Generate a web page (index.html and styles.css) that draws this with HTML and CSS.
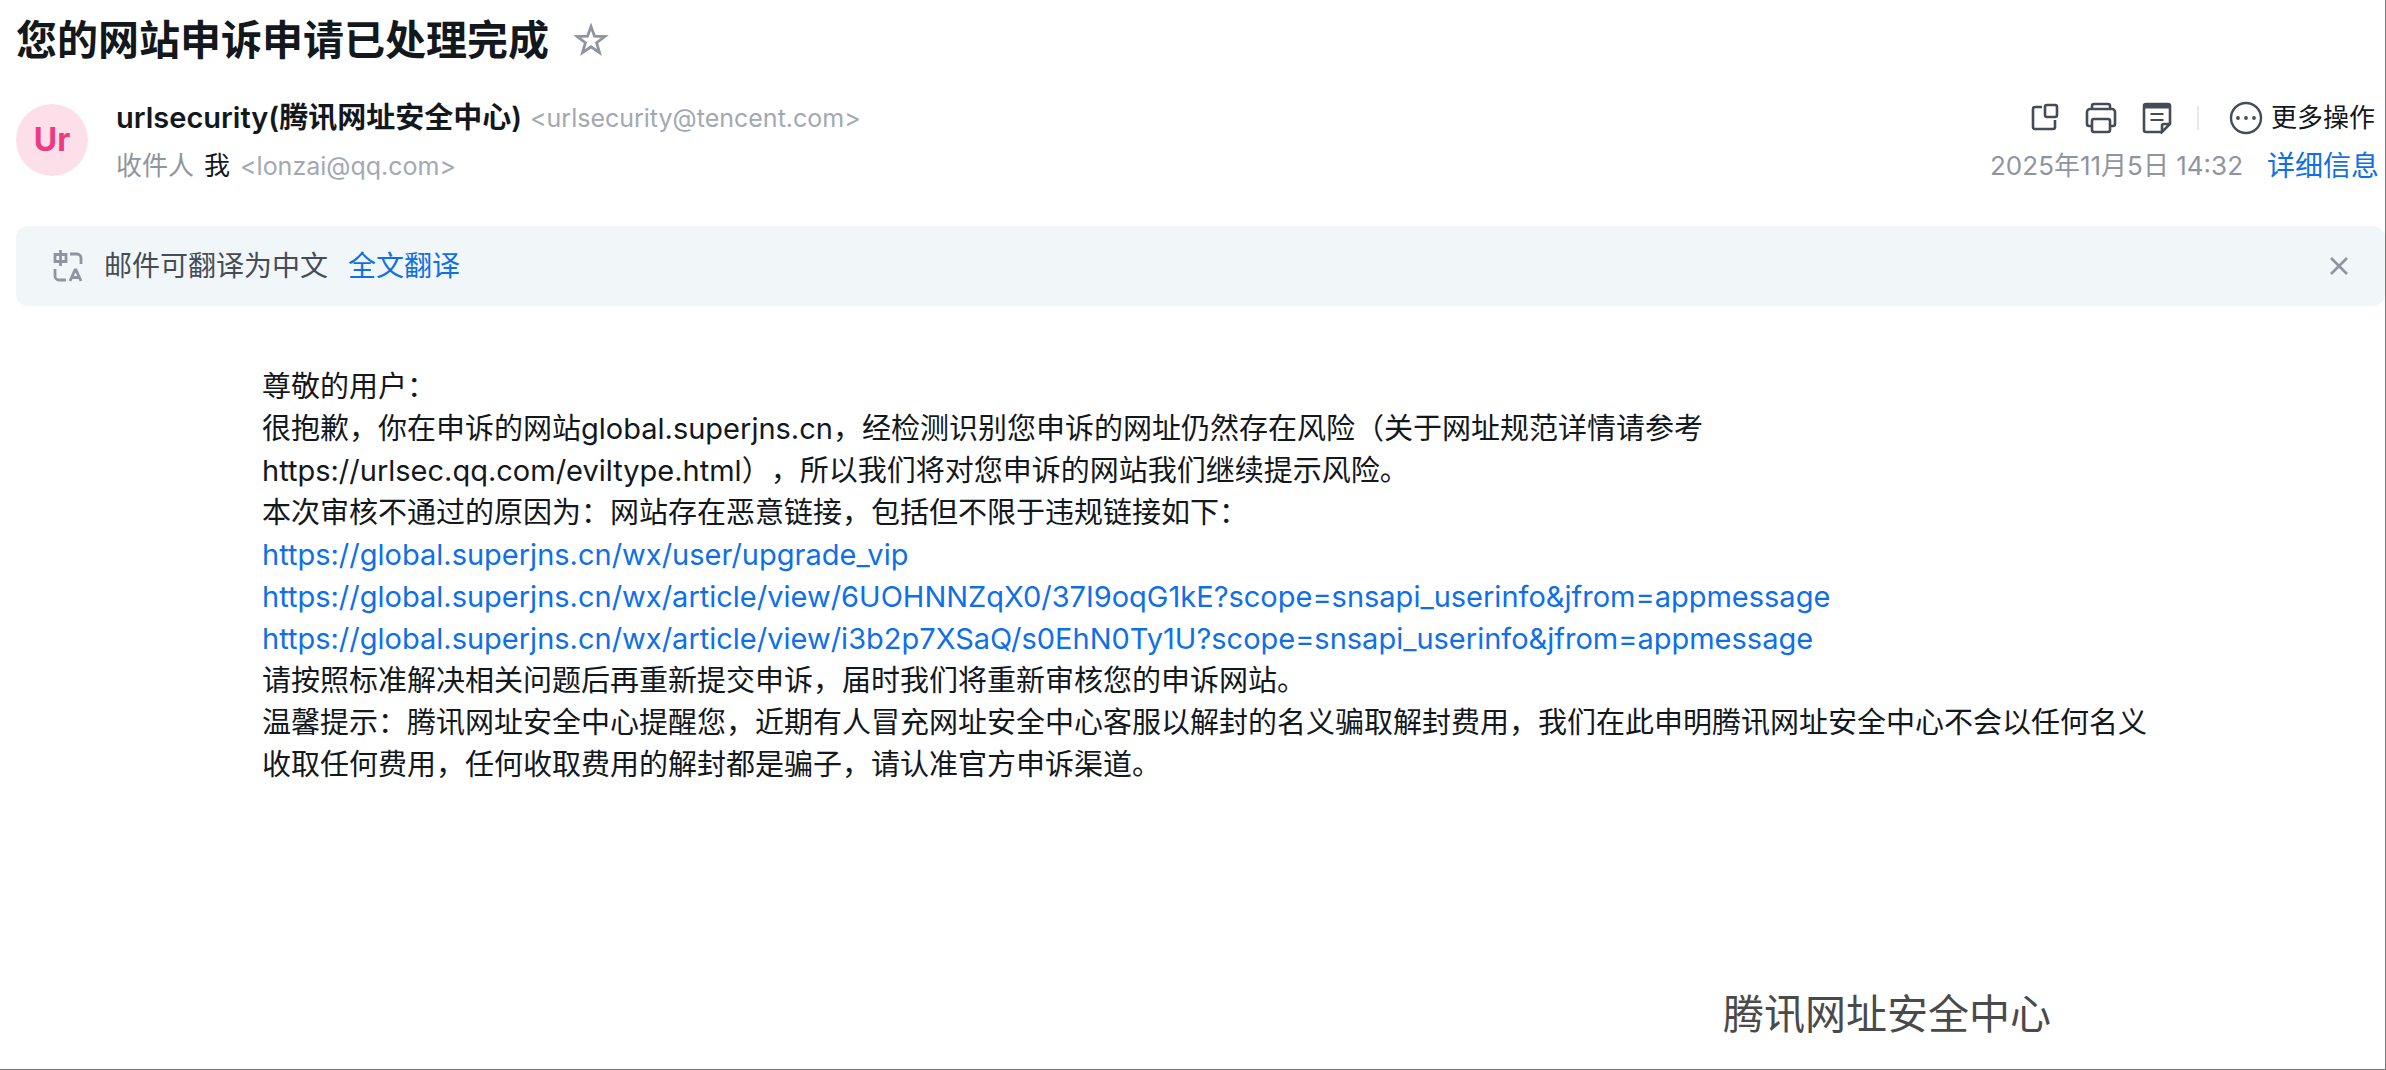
FILE: index.html
```html
<!DOCTYPE html>
<html lang="zh-CN">
<head>
<meta charset="utf-8">
<meta name="viewport" content="width=device-width, initial-scale=1">
<title>您的网站申诉申请已处理完成</title>
<link rel="stylesheet" href="styles.css">
</head>
<body>
<main class="mail">
  <header class="mail-header">
    <div class="subject">
      <h1 class="subject-title">您的网站申诉申请已处理完成</h1>
      <button class="icon-button star" type="button" aria-label="星标">
        <svg width="36" height="36" viewBox="0 0 36 36" fill="none" stroke="#8f959e" stroke-width="2.800"><path d="M18 4.500l3.500 9.700 10.300.3-8.200 6.200 2.900 9.900L18 24.800l-8.500 5.800 2.900-9.900-8.200-6.200 10.300-.3z"/></svg>
      </button>
    </div>
    <div class="meta">
      <div class="avatar" aria-hidden="true">Ur</div>
      <div class="people">
        <div class="sender"><strong class="sender-name">urlsecurity(腾讯网址安全中心)</strong><span class="address">&lt;urlsecurity@tencent.com&gt;</span></div>
        <div class="recipient"><span class="label">收件人</span><span class="me">我</span><span class="address">&lt;lonzai@qq.com&gt;</span></div>
      </div>
      <div class="side">
        <div class="actions">
          <button class="icon-button" type="button" aria-label="新窗口打开">
            <svg width="32" height="32" viewBox="0 0 32 32" fill="none" stroke="#464c56" stroke-width="2.600"><path d="M13 5H6a2 2 0 0 0-2 2v18a2 2 0 0 0 2 2h18a2 2 0 0 0 2-2v-7"/><rect x="16" y="3" width="12" height="12" rx="2"/></svg>
          </button>
          <button class="icon-button" type="button" aria-label="打印">
            <svg width="32" height="32" viewBox="0 0 32 32" fill="none" stroke="#464c56" stroke-width="2.600"><path d="M7 7V4a2 2 0 0 1 2-2h14a2 2 0 0 1 2 2v3M7 24H4a2 2 0 0 1-2-2V10a3 3 0 0 1 3-3h22a3 3 0 0 1 3 3v12a2 2 0 0 1-2 2h-3"/><rect x="7" y="17" width="18" height="13" rx="2"/></svg>
          </button>
          <button class="icon-button" type="button" aria-label="备注">
            <svg width="32" height="32" viewBox="0 0 32 32" fill="none" stroke="#464c56" stroke-width="2.600"><path d="M21 30H5a2 2 0 0 1-2-2V4a2 2 0 0 1 2-2h22a2 2 0 0 1 2 2v18l-8 8v-6a2 2 0 0 1 2-2h6"/><path d="M9.500 12h13M9.500 18h13" stroke-width="2"/><path d="M3 4h26" stroke-width="5"/></svg>
          </button>
          <span class="divider"></span>
          <button class="icon-button more" type="button">
            <svg width="34" height="34" viewBox="0 0 34 34" fill="none" stroke="#464c56" stroke-width="2.400"><circle cx="17" cy="17" r="15"/><g fill="#464c56" stroke="none"><circle cx="9" cy="17" r="1.900"/><circle cx="17" cy="17" r="1.900"/><circle cx="25" cy="17" r="1.900"/></g></svg>
            <span>更多操作</span>
          </button>
        </div>
        <div class="date-row"><time class="date" datetime="2025-11-05T14:32">2025年11月5日 14:32</time><a class="link detail" href="#detail">详细信息</a></div>
      </div>
    </div>
  </header>
  <section class="translate">
    <svg width="32" height="32" viewBox="0 0 32 32" fill="none" stroke="#8f959e" stroke-width="2.800"><path d="M3 4.500h11v7H3zM8.500 0v16M18 4h7a4 4 0 0 1 4 4v6M3 19v7a4 4 0 0 0 4 4h7M18 31l5-11h1l5 11M20 27.500h7"/></svg>
    <span>邮件可翻译为中文</span>
    <a class="link" href="#translate">全文翻译</a>
    <button class="icon-button close" type="button" aria-label="关闭">
      <svg width="20" height="20" viewBox="0 0 20 20" fill="none" stroke="#8f959e" stroke-width="2.600"><path d="M2 2l16 16M18 2L2 18"/></svg>
    </button>
  </section>
  <article class="content">
    <p>尊敬的用户：</p>
    <p>很抱歉，你在申诉的网站global.superjns.cn，经检测识别您申诉的网址仍然存在风险（关于网址规范详情请参考<br>https://urlsec.qq.com/eviltype.html），所以我们将对您申诉的网站我们继续提示风险。</p>
    <p>本次审核不通过的原因为：网站存在恶意链接，包括但不限于违规链接如下：</p>
    <p><a class="link" href="#link-1">https://global.superjns.cn/wx/user/upgrade_vip</a></p>
    <p><a class="link" href="#link-2">https://global.superjns.cn/wx/article/view/6UOHNNZqX0/37I9oqG1kE?scope=snsapi_userinfo&amp;jfrom=appmessage</a></p>
    <p><a class="link" href="#link-3">https://global.superjns.cn/wx/article/view/i3b2p7XSaQ/s0EhN0Ty1U?scope=snsapi_userinfo&amp;jfrom=appmessage</a></p>
    <p>请按照标准解决相关问题后再重新提交申诉，届时我们将重新审核您的申诉网站。</p>
    <p>温馨提示：腾讯网址安全中心提醒您，近期有人冒充网址安全中心客服以解封的名义骗取解封费用，我们在此申明腾讯网址安全中心不会以任何名义<br>收取任何费用，任何收取费用的解封都是骗子，请认准官方申诉渠道。</p>
  </article>
  <footer class="signature">腾讯网址安全中心</footer>
</main>
</body>
</html>
```
FILE: styles.css
```css
* { box-sizing: border-box; }

body {
  margin: 0;
  background: #fff;
  color: #13181d;
  font-family: Inter, "Noto Sans CJK SC", sans-serif;
  font-size: 29px;
  line-height: 42px;
  text-spacing-trim: space-all;
}

h1, p { margin: 0; }

.mail {
  min-height: 100vh;
  padding: 10px 0 0 16px;
  border-right: 1px solid #777;
  border-bottom: 1px solid #777;
}

.icon-button {
  display: flex;
  align-items: center;
  padding: 0;
  border: 0;
  background: none;
  color: inherit;
  font: inherit;
  cursor: pointer;
}

.icon-button svg { display: block; }

.link { color: #0f6fe8; text-decoration: none; }

.subject { display: flex; align-items: center; gap: 24px; height: 60px; }
.subject-title { font-size: 41px; line-height: 60px; font-weight: 700; }

.meta { display: flex; margin-top: 24px; }

.avatar {
  width: 72px;
  height: 72px;
  margin-top: 10px;
  border-radius: 50%;
  background: #fddfea;
  color: #ee3a80;
  font-size: 32px;
  line-height: 72px;
  font-weight: 700;
  text-align: center;
}

.people { flex: 1; margin-left: 28px; }
.sender, .recipient { display: flex; align-items: center; height: 48px; }
.sender { gap: 8px; }
.sender-name { font-weight: 600; }
.recipient { gap: 10px; font-size: 26px; }
.address { color: #a2a9b2; font-size: 25px; }
.label { color: #8f959e; }

.side { padding-right: 6px; }
.actions, .date-row { display: flex; align-items: center; justify-content: flex-end; height: 48px; }
.actions { gap: 24px; padding-right: 4px; }
.divider { width: 2px; height: 24px; background: #e6e8eb; }
.more { gap: 8px; margin-left: 6px; font-size: 26px; }
.date-row { gap: 24px; font-size: 28px; }
.date { color: #8f959e; font-size: 26px; }

.translate {
  display: flex;
  align-items: center;
  gap: 20px;
  height: 80px;
  margin-top: 36px;
  padding: 0 36px;
  border-radius: 12px;
  background: #f1f6f9;
  color: #464c56;
  font-size: 28px;
}

.close { margin-left: auto; }

.content { padding: 60px 200px 0 246px; }

.signature {
  padding: 198px 334px 0 0;
  color: #4a4a4a;
  font-size: 41px;
  line-height: 60px;
  text-align: right;
}
```
